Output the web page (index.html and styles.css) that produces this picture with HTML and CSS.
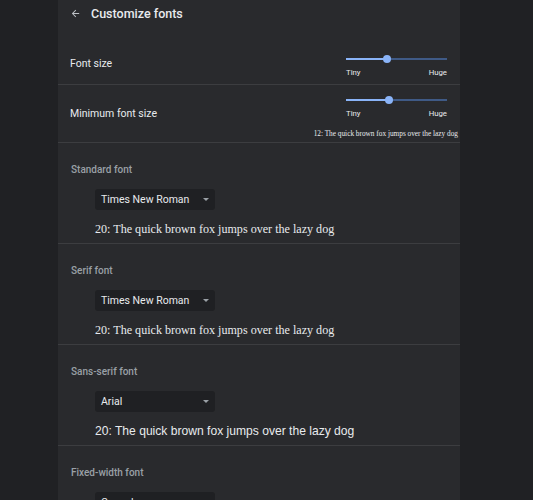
FILE: index.html
```html
<!DOCTYPE html>
<html lang="en">
<head>
    <meta charset="UTF-8">
    <meta name="viewport" content="width=device-width, initial-scale=1.0">
    <title>Customize fonts</title>
    <link rel="stylesheet" href="styles.css">
</head>
<body>

<div class="page">
    <div class="header">
        <svg class="back" viewBox="0 0 24 24" width="11" height="11">
            <path d="M20 11H7.83l5.59-5.59L12 4l-8 8 8 8 1.41-1.41L7.83 13H20v-2z" fill="currentColor"/>
        </svg>
        <h1>Customize fonts</h1>
    </div>

    <!-- 字體大小 -->
    <div class="row row-size">
        <div class="row-label">Font size</div>
        <div class="slider-col">
            <div class="slider">
                <div class="track"><div class="fill" style="width: 41%;"></div></div>
                <div class="knob" style="left: 41%;"></div>
            </div>
            <div class="ticks"><span>Tiny</span><span>Huge</span></div>
        </div>
    </div>

    <div class="row row-min">
        <div class="row-label">Minimum font size</div>
        <div class="slider-col">
            <div class="slider">
                <div class="track"><div class="fill" style="width: 43%;"></div></div>
                <div class="knob" style="left: 43%;"></div>
            </div>
            <div class="ticks"><span>Tiny</span><span>Huge</span></div>
            <div class="min-sample">12: The quick brown fox jumps over the lazy dog</div>
        </div>
    </div>

    <!-- 字型選擇 -->
    <div class="font-section">
        <div class="section-label">Standard font</div>
        <div class="select"><span>Times New Roman</span><i class="caret"></i></div>
        <div class="sample serif">20: The quick brown fox jumps over the lazy dog</div>
    </div>

    <div class="font-section">
        <div class="section-label">Serif font</div>
        <div class="select"><span>Times New Roman</span><i class="caret"></i></div>
        <div class="sample serif">20: The quick brown fox jumps over the lazy dog</div>
    </div>

    <div class="font-section">
        <div class="section-label">Sans-serif font</div>
        <div class="select"><span>Arial</span><i class="caret"></i></div>
        <div class="sample sans">20: The quick brown fox jumps over the lazy dog</div>
    </div>

    <div class="font-section">
        <div class="section-label">Fixed-width font</div>
        <div class="select"><span>Consolas</span><i class="caret"></i></div>
        <div class="sample mono">20: The quick brown fox jumps over the lazy dog</div>
    </div>
</div>

</body>
</html>
```

FILE: styles.css
```css
body {
    font-family: Roboto, 'Liberation Sans', sans-serif;
    background-color: #202124;
    margin: 0;
    padding: 0;
    color: #e8eaed;
    overflow: hidden;
}
.page {
    width: 402px;
    margin-left: 58px;
    min-height: 500px;
    background-color: #292a2d;
}
.header {
    height: 28px;
    display: flex;
    align-items: center;
    padding-left: 12px;
}
.back {
    color: #bdc1c6;
    margin: -1px 10px 0 0;
}
.header h1 {
    margin: -2px 0 0 0;
    font-size: 12.5px;
    font-weight: 500;
    color: #e8eaed;
}
.row {
    display: flex;
    align-items: center;
    justify-content: space-between;
    padding-left: 12px;
    border-bottom: 1px solid #3c3d40;
}
.row-size {
    margin-top: 14px;
    height: 42px;
}
.row-min {
    height: 57px;
}
.row-label {
    font-size: 10.5px;
}
.slider-col {
    display: flex;
    flex-direction: column;
    align-items: flex-end;
    padding-right: 2px;
    margin-top: 6px;
}
.row-min .slider-col {
    margin-top: 9px;
}
.slider,
.ticks {
    width: 101px;
    margin-right: 11px;
}
.slider {
    position: relative;
    height: 8px;
}
.track {
    position: absolute;
    left: 0;
    right: 0;
    top: 3px;
    height: 2px;
    background-color: #3f5a86;
}
.fill {
    height: 100%;
    background-color: #8ab4f8;
}
.knob {
    position: absolute;
    top: 0;
    width: 8px;
    height: 8px;
    margin-left: -4px;
    border-radius: 50%;
    background-color: #8ab4f8;
}
.ticks {
    display: flex;
    justify-content: space-between;
    font-size: 7.8px;
    line-height: 10px;
    margin-top: 5px;
}
.min-sample {
    font-family: 'Liberation Serif', serif;
    font-size: 7.3px;
    line-height: 12px;
    margin-top: 9px;
}
.font-section {
    padding: 20px 0 6px 13px;
    border-bottom: 1px solid #3c3d40;
}
.section-label {
    font-size: 10px;
    font-weight: 500;
    color: #9aa0a6;
    line-height: 14px;
}
.select {
    width: 120px;
    height: 21px;
    box-sizing: border-box;
    margin: 12px 0 0 24px;
    padding: 0 6px;
    display: flex;
    align-items: center;
    justify-content: space-between;
    background-color: #1f2023;
    border-radius: 3px;
    font-size: 10.5px;
}
.caret {
    width: 0;
    height: 0;
    border-left: 3px solid transparent;
    border-right: 3px solid transparent;
    border-top: 3px solid #9aa0a6;
}
.sample {
    margin: 11px 0 0 24px;
    font-size: 12.1px;
    line-height: 16px;
}
.serif {
    font-family: 'Liberation Serif', serif;
}
.sans {
    font-family: 'Liberation Sans', sans-serif;
}
.mono {
    font-family: 'Liberation Mono', monospace;
}
```
